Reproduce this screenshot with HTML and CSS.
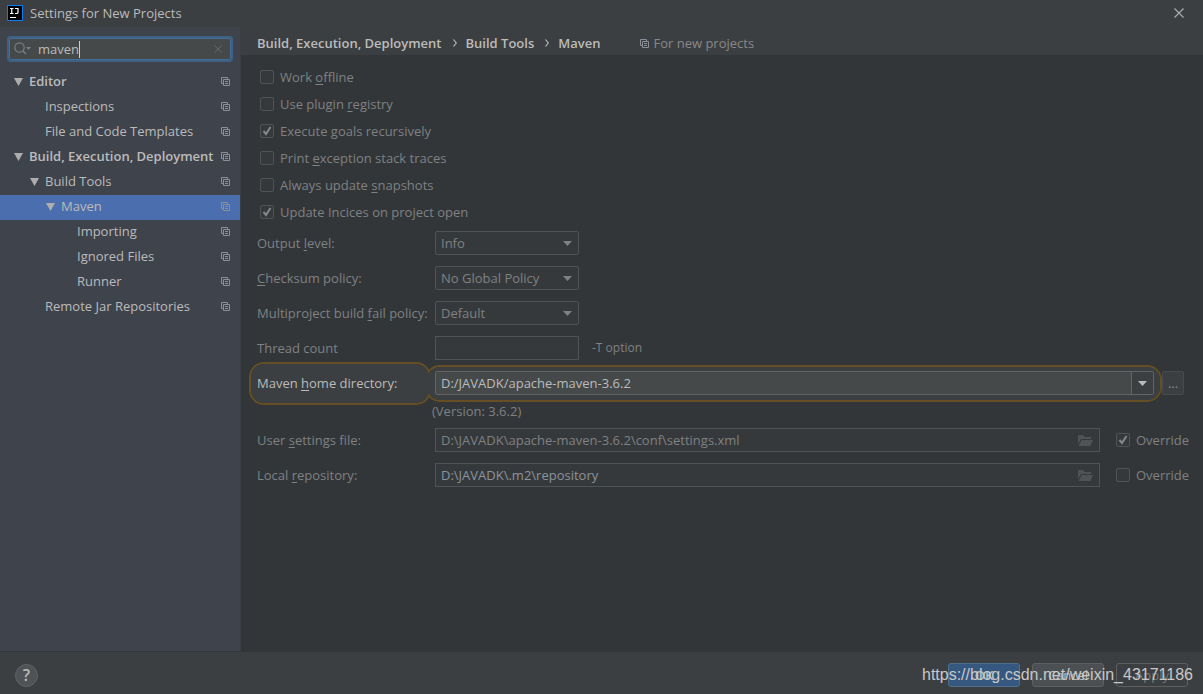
FILE: index.html
```html
<!DOCTYPE html>
<html lang="en">
<head>
<meta charset="utf-8">
<title>Settings for New Projects</title>
<link rel="stylesheet" href="styles.css">
</head>
<body>
<svg class="defs" aria-hidden="true">
  <symbol id="copy" viewBox="0 0 9 9"><path d="M2 6.500H.5V.5h6V2M2.500 2.500h6v6h-6zM4 4.500h3M4 6.500h3" fill="none" stroke="currentColor"/></symbol>
  <symbol id="down" viewBox="0 0 9 5"><path d="M0 0h9L4.500 5z" fill="currentColor"/></symbol>
  <symbol id="tree" viewBox="0 0 9 8"><path d="M0 0h9L4.500 8z" fill="currentColor"/></symbol>
  <symbol id="cross" viewBox="0 0 10 10"><path d="M.5.5l9 9M9.500.5l-9 9" fill="none" stroke="currentColor" stroke-width="1.200"/></symbol>
  <symbol id="chevron" viewBox="0 0 4 8"><path d="M.5.5L3.300 4 .5 7.500" fill="none" stroke="currentColor" stroke-width="1.200"/></symbol>
  <symbol id="folder" viewBox="0 0 15 11"><path d="M0 0h5l1.500 2H13v2H3L0 9z M3.600 5H15l-2.500 6H.5z" fill="currentColor"/></symbol>
</svg>
<div class="window">
  <header class="titlebar">
    <svg class="logo" width="16" height="16" viewBox="0 0 16 16"><path d="M.5.5h15v15H.5z" fill="#000" stroke="#087cfa"/><path d="M3 3.500h3.500M4.750 3.500v5M3 8.500h3.500M8 3.500h3v4q0 1-1.500 1H8M3 12.500h6" fill="none" stroke="#fff" stroke-width="1.200"/></svg>
    <h1 class="title">Settings for New Projects</h1>
    <button class="plain close" aria-label="Close"><svg width="10" height="10"><use href="#cross"/></svg></button>
  </header>
  <div class="body">
    <nav class="sidebar">
      <div class="search">
        <svg width="18" height="14" viewBox="0 0 18 14"><circle cx="5.500" cy="5.500" r="4.700" fill="none" stroke="currentColor" stroke-width="1.200"/><path d="M9 9l3 3" stroke="currentColor" stroke-width="1.500"/><path d="M12 5h5l-2.500 3z" fill="currentColor"/></svg>
        <div class="query"><input type="text" id="search" aria-label="Search settings" value="maven"><span class="caret"></span></div>
        <button class="plain clear" aria-label="Clear"><svg width="8" height="8"><use href="#cross"/></svg></button>
      </div>
      <ul class="tree">
        <li class="node l0 bold"><svg class="arrow"><use href="#tree"/></svg><a href="#">Editor</a><svg class="copy"><use href="#copy"/></svg></li>
        <li class="node l1"><span class="arrow"></span><a href="#">Inspections</a><svg class="copy"><use href="#copy"/></svg></li>
        <li class="node l1"><span class="arrow"></span><a href="#">File and Code Templates</a><svg class="copy"><use href="#copy"/></svg></li>
        <li class="node l0 bold"><svg class="arrow"><use href="#tree"/></svg><a href="#">Build, Execution, Deployment</a><svg class="copy"><use href="#copy"/></svg></li>
        <li class="node l1"><svg class="arrow"><use href="#tree"/></svg><a href="#">Build Tools</a><svg class="copy"><use href="#copy"/></svg></li>
        <li class="node l2 selected"><svg class="arrow"><use href="#tree"/></svg><a href="#">Maven</a><svg class="copy"><use href="#copy"/></svg></li>
        <li class="node l3"><span class="arrow"></span><a href="#">Importing</a><svg class="copy"><use href="#copy"/></svg></li>
        <li class="node l3"><span class="arrow"></span><a href="#">Ignored Files</a><svg class="copy"><use href="#copy"/></svg></li>
        <li class="node l3"><span class="arrow"></span><a href="#">Runner</a><svg class="copy"><use href="#copy"/></svg></li>
        <li class="node l1"><span class="arrow"></span><a href="#">Remote Jar Repositories</a><svg class="copy"><use href="#copy"/></svg></li>
      </ul>
    </nav>
    <main class="main">
      <div class="crumbs">
        <span>Build, Execution, Deployment</span><svg class="chev"><use href="#chevron"/></svg><span>Build Tools</span><svg class="chev"><use href="#chevron"/></svg><span>Maven</span>
        <span class="scope"><svg class="copy"><use href="#copy"/></svg>For new projects</span>
      </div>
      <form class="form">
        <div class="checks">
          <label class="check"><input type="checkbox"><span>Work <u>o</u>ffline</span></label>
          <label class="check"><input type="checkbox"><span>Use plugin <u>r</u>egistry</span></label>
          <label class="check"><input type="checkbox" checked><span>Execute <u>g</u>oals recursively</span></label>
          <label class="check"><input type="checkbox"><span>Print <u>e</u>xception stack traces</span></label>
          <label class="check"><input type="checkbox"><span>Always update <u>s</u>napshots</span></label>
          <label class="check"><input type="checkbox" checked><span>Update Incices on project open</span></label>
        </div>
        <div class="row"><label for="output">Output <u>l</u>evel:</label><div class="select"><select id="output"><option>Info</option></select><svg><use href="#down"/></svg></div></div>
        <div class="row"><label for="checksum"><u>C</u>hecksum policy:</label><div class="select"><select id="checksum"><option>No Global Policy</option></select><svg><use href="#down"/></svg></div></div>
        <div class="row"><label for="fail">Multiproject build <u>f</u>ail policy:</label><div class="select"><select id="fail"><option>Default</option></select><svg><use href="#down"/></svg></div></div>
        <div class="row"><label for="threads">Thread count</label><div class="threads"><input type="text" id="threads" class="box"><span class="hint">-T option</span></div></div>
        <div class="row home">
          <label for="home" class="spot"><span>Maven <u>h</u>ome directory:</span></label>
          <div class="homefield">
            <div class="spot combo"><div class="combobox"><input type="text" id="home" value="D:/JAVADK/apache-maven-3.6.2"><button type="button" class="plain" aria-label="Show list"><svg width="9" height="5"><use href="#down"/></svg></button></div></div>
            <button type="button" class="browse">...</button>
          </div>
        </div>
        <p class="version">(Version: 3.6.2)</p>
        <div class="row"><label for="user">User <u>s</u>ettings file:</label><div class="path"><div class="box file"><input type="text" id="user" value="D:\JAVADK\apache-maven-3.6.2\conf\settings.xml"><button type="button" class="plain" aria-label="Browse"><svg width="15" height="11"><use href="#folder"/></svg></button></div><label class="check"><input type="checkbox" checked><span>Override</span></label></div></div>
        <div class="row"><label for="local">Local <u>r</u>epository:</label><div class="path"><div class="box file local"><input type="text" id="local" value="D:\JAVADK\.m2\repository"><button type="button" class="plain" aria-label="Browse"><svg width="15" height="11"><use href="#folder"/></svg></button></div><label class="check"><input type="checkbox"><span>Override</span></label></div></div>
      </form>
    </main>
  </div>
  <footer class="footer">
    <button class="help" aria-label="Help">?</button>
    <button class="btn ok">OK</button>
    <button class="btn cancel">Cancel</button>
    <button class="btn apply">Apply</button>
    <span class="watermark">https://blog.csdn.net/weixin_43171186</span>
  </footer>
</div>
</body>
</html>
```
FILE: styles.css
```css
* { box-sizing: border-box; }
body { margin: 0; background: #3c3f41; color: #bbb; font: 13px/20px "Open Sans", sans-serif; }
input, select, button { font: inherit; color: inherit; margin: 0; }
u { text-underline-offset: 2px; }
.defs { position: absolute; width: 0; height: 0; }
.plain { display: flex; align-items: center; padding: 0; border: 0; background: none; }
.window { display: flex; flex-direction: column; min-height: 100vh; }

.titlebar { display: flex; align-items: center; gap: 7px; height: 27px; padding: 0 19px 1px 7px; }
.title { flex: 1; margin: 0; font-size: 13px; font-weight: 400; }
.close { color: #aaa; }

.body { display: flex; flex: 1; }
.sidebar { width: 241px; flex: none; background: #3f434c; border-right: 1px solid #3a3e45; }
.search { display: flex; align-items: center; gap: 6px; height: 26px; margin: 9px 7px 8px; padding: 0 9px 0 5px; background: #45494a; border: 2px solid #3d6185; border-radius: 4px; box-shadow: inset 0 0 0 1px #466d94; color: #777d82; }
.query { display: flex; flex: 1; align-items: center; color: #bbb; }
.query input { field-sizing: content; padding: 0; border: 0; outline: 0; background: none; }
.caret { width: 1px; height: 17px; background: #ccc; }
.clear { color: #666b6e; }
.tree { list-style: none; margin: 0; padding: 0; }
.node { display: flex; align-items: center; gap: 6px; height: 25px; padding-right: 10px; padding-bottom: 2px; white-space: nowrap; }
.node a { flex: 1; min-width: 0; padding-bottom: 2px; color: inherit; text-decoration: none; }
.arrow { width: 9px; height: 8px; flex: none; color: #adadad; }
.copy { width: 9px; height: 9px; flex: none; color: #8a9095; }
.l0 { padding-left: 14px; }
.l1 { padding-left: 30px; }
.l2 { padding-left: 46px; }
.l3 { padding-left: 62px; }
.bold { font-weight: 600; }
.selected { background: #4b6eaf; }

.main { flex: 1; min-width: 0; display: flex; flex-direction: column; }
.crumbs { display: flex; align-items: center; height: 28px; padding: 4px 16px 0; font-weight: 600; }
.chev { width: 4px; height: 8px; margin: 0 9px 0 11px; }
.scope { display: flex; align-items: center; gap: 4px; margin-left: 40px; font-weight: 400; color: #888; }
.form { flex: 1; padding: 8px 16px 16px; background: #323639; color: #7f8182; }
.checks { padding-left: 3px; }
.check { display: flex; align-items: center; gap: 6px; height: 27px; width: max-content; }
.check input { appearance: none; width: 14px; height: 14px; flex: none; border: 1px solid #505355; border-radius: 2px; background: #36393c; }
.check input:checked { background: #36393c url("data:image/svg+xml,%3Csvg xmlns='http://www.w3.org/2000/svg' viewBox='0 0 12 12'%3E%3Cpath d='M2.500 6l2.500 3 4.500-7' fill='none' stroke='%23858789' stroke-width='2'/%3E%3C/svg%3E"); }
.row { display: grid; grid-template-columns: 178px 1fr; align-items: center; height: 24px; margin-bottom: 11px; }
.checks + .row { margin-top: 6px; }
.select { position: relative; width: 144px; height: 24px; }
.select select { appearance: none; width: 100%; height: 24px; padding: 0 5px; border: 1px solid #505355; border-radius: 2px; background: #36393c; }
.select svg { position: absolute; right: 7px; top: 10px; width: 9px; height: 5px; pointer-events: none; }
.threads { display: flex; align-items: center; gap: 13px; }
.box { height: 24px; border: 1px solid #505355; background: #36393c; }
.threads .box { width: 144px; }
.hint { font-size: 12px; }

.home { color: #bbb; margin-bottom: 0; }
.homefield { display: flex; align-items: center; gap: 8px; padding-right: 3px; }
.spot { position: relative; }
.spot::before, .spot::after { content: ""; position: absolute; inset: -11px 4px -12px -8px; border-radius: 15px; }
.spot::before { z-index: 0; border: 2px solid #664f24; }
.spot::after { z-index: 1; margin: 2px; border-radius: 13px; background: #3c3f41; }
.spot.combo::before, .spot.combo::after { inset: -6px -8px -7px -10px; }
.spot > * { position: relative; z-index: 2; }
.combo { flex: 1; }
.combobox { display: flex; height: 24px; border: 1px solid #646464; border-radius: 2px; background: #45494a; }
.combobox input { flex: 1; min-width: 0; padding: 0 5px; border: 0; background: none; }
.combobox button { width: 22px; justify-content: center; border-left: 1px solid #646464; background: #3c3f41; }
.browse { width: 22px; height: 24px; padding: 0; border: 1px solid #484b4d; border-radius: 2px; background: #3c3f41; color: #888; }
.version { margin: 0 0 0 175px; padding: 6px 0 7px; }
.path { display: flex; gap: 16px; align-items: center; height: 24px; }
.path .check { width: 71px; }
.file { display: flex; flex: 1; padding-right: 6px; }
.file input { flex: 1; min-width: 0; padding: 0 5px; border: 0; background: none; }
.file button { color: #505355; }
.local input { color: #8b939b; }

.footer { position: relative; display: flex; align-items: center; gap: 12px; height: 43px; padding: 4px 15px 0; border-top: 1px solid #323537; }
.help { width: 23px; height: 23px; margin-right: auto; padding: 0; border: 1px solid #616466; border-radius: 50%; background: #505355; font-size: 16px; font-weight: 600; line-height: 20px; }
.btn { width: 72px; height: 24px; padding: 0; border: 1px solid #5e6060; border-radius: 3px; background: #4c5052; }
.ok { background: #365880; border-color: #4c708c; font-weight: 600; }
.apply { background: #3c3f41; color: #777; }
.watermark { position: absolute; right: 10px; top: 12px; font: 16px/22px "Liberation Sans", sans-serif; color: #c8c8c8; pointer-events: none; }
```
